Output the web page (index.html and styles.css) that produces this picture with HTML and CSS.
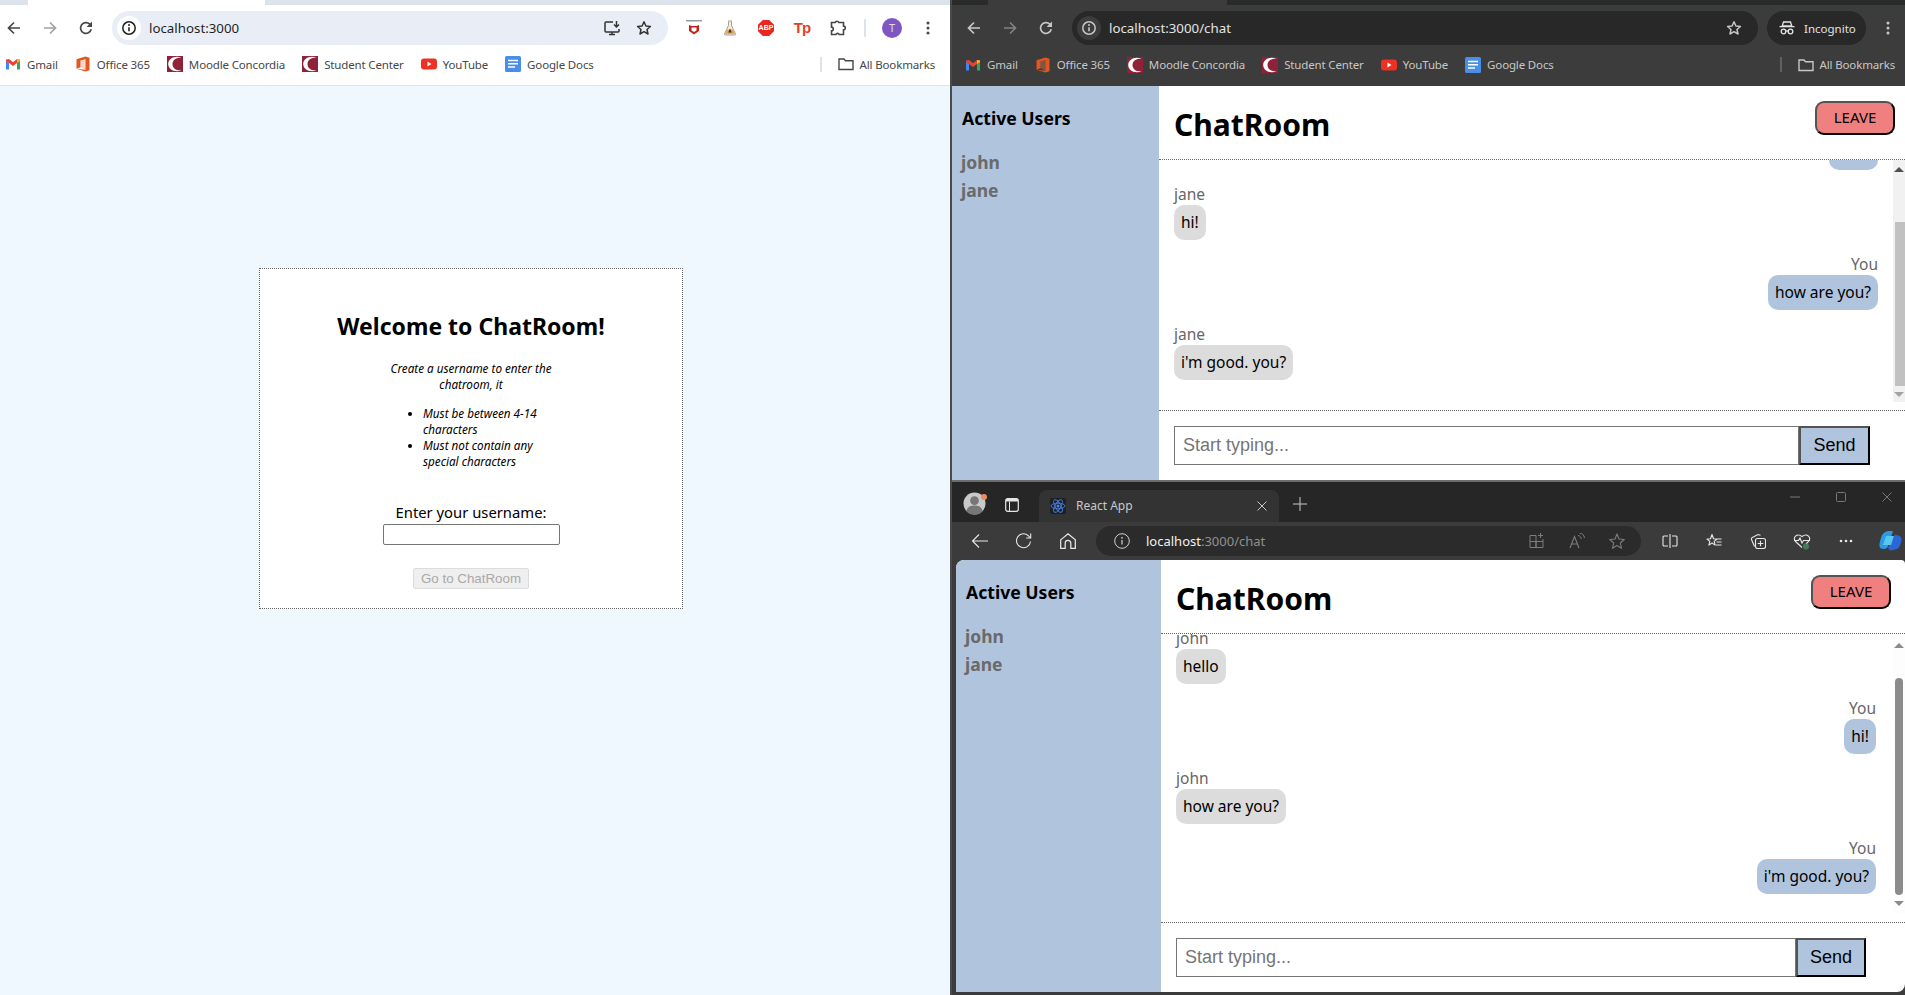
FILE: index.html
```html
<!DOCTYPE html>
<html lang="en">
<head>
<meta charset="utf-8">
<title>ChatRoom windows</title>
<link rel="stylesheet" href="styles.css">
</head>
<body>
<svg class="sprite" aria-hidden="true">
  <defs>
    <symbol id="i-back" viewBox="0 0 16 16"><path d="M14 8H2.500M8 2.500 2.500 8 8 13.500" fill="none" stroke="currentColor" stroke-width="1.700"/></symbol>
    <symbol id="i-fwd" viewBox="0 0 16 16"><path d="M2 8h11.500M8 2.500 13.500 8 8 13.500" fill="none" stroke="currentColor" stroke-width="1.700"/></symbol>
    <symbol id="i-reload" viewBox="0 0 16 16"><path d="M13.200 9.200A5.400 5.400 0 1 1 11.800 4.200L13.500 6" fill="none" stroke="currentColor" stroke-width="1.700"/><path d="M14 1.600V7H8.600Z" fill="currentColor"/></symbol>
    <symbol id="i-info" viewBox="0 0 16 16"><circle cx="8" cy="8" r="6.200" fill="none" stroke="currentColor" stroke-width="1.500"/><path d="M8 7.200v4" stroke="currentColor" stroke-width="1.600"/><circle cx="8" cy="5" r="1" fill="currentColor"/></symbol>
    <symbol id="i-star" viewBox="0 0 16 16"><path d="M8 1.800 9.900 6l4.500.5-3.400 3 1 4.500L8 11.700 4 14l1-4.500-3.400-3L6.100 6Z" fill="none" stroke="currentColor" stroke-width="1.500" stroke-linejoin="round"/></symbol>
    <symbol id="i-install" viewBox="0 0 17 16"><path d="M9 2H2a1 1 0 0 0-1 1v8a1 1 0 0 0 1 1h12a1 1 0 0 0 1-1V9M5 14.500h6M8 12v2.500" fill="none" stroke="currentColor" stroke-width="1.500"/><path d="M12.500 1v5.500M10 4.500l2.500 2.500L15 4.500" fill="none" stroke="currentColor" stroke-width="1.500"/></symbol>
    <symbol id="i-gmail" viewBox="0 0 16 16"><path d="M1 4v9.500h3V7Z" fill="#4285f4"/><path d="M15 4v9.500h-3V7Z" fill="#34a853"/><path d="M1 3.500 4 3l4 3.200L12 3l3 .5V5l-3 2-4 3-4-3-3-2Z" fill="#ea4335"/><path d="M12 3l3 .5V5l-3 2Z" fill="#fbbc04"/></symbol>
    <symbol id="i-office" viewBox="0 0 16 16"><path d="M1.500 3.200 10.500.5l4 1.300v12.400l-4 1.300-9-2.700 9 1V3.300L5.500 4.500v6.700l-4 1.600Z" fill="#e2561f"/><path d="M5.500 4.500l5-1.200v10.500l-5-2.600Z" fill="#f08a5d" opacity=".35"/></symbol>
    <symbol id="i-concordia" viewBox="0 0 16 16"><rect width="16" height="16" fill="#8f2139"/><path d="M14.500 1.800C9-1 1.200 2 1.200 8S9 17 14.500 14.200C10 15 5.500 12.500 5.500 8S10 1 14.500 1.800Z" fill="#fff"/><rect x="14.700" y="5" width="1.300" height="6" fill="#8f2139"/></symbol>
    <symbol id="i-youtube" viewBox="0 0 16 16"><rect y="2.500" width="16" height="11" rx="3" fill="#ed3124"/><path d="M6.500 5.600v4.800L10.500 8Z" fill="#fff"/></symbol>
    <symbol id="i-docs" viewBox="0 0 16 16"><rect width="16" height="16" rx="1.500" fill="#4a8fe7"/><path d="M3 3.700h10v1.500H3ZM3 7h10v1.500H3ZM3 10.300h7v1.500H3Z" fill="#fff"/></symbol>
    <symbol id="i-folder" viewBox="0 0 16 16"><path d="M1 3h5l1.500 1.800H15v8.700H1Z" fill="none" stroke="currentColor" stroke-width="1.400"/></symbol>
    <symbol id="i-mcafee" viewBox="0 0 16 16"><path d="M0 0h16v1.500H0Z" fill="#9a9a9a"/><path d="M3 5l2.500 1h5L13 5v6l-5 3.500L3 11Z" fill="#c4211c"/><path d="M5.500 7.500h5v3L8 12l-2.500-1.500Z" fill="#fff"/></symbol>
    <symbol id="i-flask" viewBox="0 0 16 16"><path d="M6 1h4M6.500 1.500v4L2.500 14a.8.8 0 0 0 .7 1h9.600a.8.8 0 0 0 .7-1L9.500 5.500v-4" fill="#f5ecdf" stroke="#a9a096" stroke-width="1"/><path d="M5 9.500h6l2 4.500H3Z" fill="#eda955"/><path d="M8 8.500l1.800 4H6.200Z" fill="#333"/></symbol>
    <symbol id="i-puzzle" viewBox="0 0 16 16"><path d="M1.500 2.500h3.700a1.900 1.900 0 0 1 3.600 0h4.700v3.600a1.800 1.800 0 0 1 0 3.700v4.700H9.300a1.900 1.900 0 0 0-3.500 0H1.500v-3.800a1.800 1.800 0 0 0 0-3.600Z" fill="none" stroke="currentColor" stroke-width="1.600"/></symbol>
    <symbol id="i-dots" viewBox="0 0 16 16"><circle cx="8" cy="3" r="1.500" fill="currentColor"/><circle cx="8" cy="8" r="1.500" fill="currentColor"/><circle cx="8" cy="13" r="1.500" fill="currentColor"/></symbol>
    <symbol id="i-incog" viewBox="0 0 16 16"><path d="M4.500 2h7l1.300 4H3.200ZM.5 6.700h15" fill="none" stroke="currentColor" stroke-width="1.300"/><circle cx="4.500" cy="11.500" r="2.300" fill="none" stroke="currentColor" stroke-width="1.300"/><circle cx="11.500" cy="11.500" r="2.300" fill="none" stroke="currentColor" stroke-width="1.300"/><path d="M6.800 11h2.400" stroke="currentColor" stroke-width="1.300"/></symbol>
    <symbol id="i-profile" viewBox="0 0 24 24"><circle cx="12" cy="12" r="11.500" fill="#c9c9c9"/><circle cx="12" cy="9" r="4.500" fill="#777"/><path d="M3.500 20c1-5 5-6 8.500-6s7.500 1 8.500 6A11.500 11.500 0 0 1 3.500 20Z" fill="#777"/></symbol>
    <symbol id="i-tabs" viewBox="0 0 14 14"><rect x=".7" y=".7" width="12.600" height="12.600" rx="2" fill="none" stroke="currentColor" stroke-width="1.200"/><path d="M1 3.600h12V1.500L12 1H2L1 1.500Z" fill="currentColor"/><path d="M4.500 3.500v9.500" stroke="currentColor" stroke-width="1"/></symbol>
    <symbol id="i-react" viewBox="0 0 16 16"><rect width="16" height="16" rx="2" fill="#1c2127"/><g fill="none" stroke="#4b7fe0" stroke-width=".9"><ellipse cx="8" cy="8" rx="7" ry="2.800"/><ellipse cx="8" cy="8" rx="7" ry="2.800" transform="rotate(60 8 8)"/><ellipse cx="8" cy="8" rx="7" ry="2.800" transform="rotate(120 8 8)"/></g><circle cx="8" cy="8" r="1.500" fill="#4b7fe0"/></symbol>
    <symbol id="i-close" viewBox="0 0 12 12"><path d="M1.500 1.500l9 9M10.500 1.500l-9 9" stroke="currentColor" stroke-width="1" fill="none"/></symbol>
    <symbol id="i-plus" viewBox="0 0 14 14"><path d="M7 0v14M0 7h14" stroke="currentColor" stroke-width="1" fill="none"/></symbol>
    <symbol id="i-eback" viewBox="0 0 18 16"><path d="M17 8H1.500M8 1.500 1.500 8 8 14.500" fill="none" stroke="currentColor" stroke-width="1.100"/></symbol>
    <symbol id="i-ereload" viewBox="0 0 18 18"><path d="M15.500 9.500A7 7 0 1 1 13.500 3.800L15.500 6" fill="none" stroke="currentColor" stroke-width="1.100"/><path d="M15.700 1.500V6h-4.500" fill="none" stroke="currentColor" stroke-width="1.100"/></symbol>
    <symbol id="i-home" viewBox="0 0 16 16"><path d="M1.500 7 8 1.500 14.500 7v7.500h-4V10a2.500 2.500 0 0 0-5 0v4.500h-4Z" fill="none" stroke="currentColor" stroke-width="1.100"/></symbol>
    <symbol id="i-einfo" viewBox="0 0 16 16"><circle cx="8" cy="8" r="7.300" fill="none" stroke="currentColor" stroke-width="1"/><path d="M8 7v4.500" stroke="currentColor" stroke-width="1.200"/><circle cx="8" cy="4.800" r=".9" fill="currentColor"/></symbol>
    <symbol id="i-grid" viewBox="0 0 16 16"><path d="M1 2.500h6v12H1ZM1 8.500h13V14.500H7M7 8.500V14.500M14 8.500V6M11.500 0v5M9 2.500h5" fill="none" stroke="currentColor" stroke-width="1"/></symbol>
    <symbol id="i-read" viewBox="0 0 16 16"><path d="M1 15 5.500 3.500 10 15M2.500 11h6" fill="none" stroke="currentColor" stroke-width="1.100"/><path d="M9 2.500c2 .3 3 1.500 3.300 3.500M10.500 0c3 .5 4.600 2.200 5 5" fill="none" stroke="currentColor" stroke-width="1"/></symbol>
    <symbol id="i-estar" viewBox="0 0 16 16"><path d="M8 1 10 6l5.300.5-4 3.500 1.200 5.200L8 12.500l-4.500 2.700L4.700 10 .7 6.500 6 6Z" fill="none" stroke="currentColor" stroke-width="1.100" stroke-linejoin="round"/></symbol>
    <symbol id="i-split" viewBox="0 0 16 16"><path d="M6 3H2a1 1 0 0 0-1 1v8a1 1 0 0 0 1 1h4M10 3h4a1 1 0 0 1 1 1v8a1 1 0 0 1-1 1h-4M8 1v14" fill="none" stroke="currentColor" stroke-width="1.100"/></symbol>
    <symbol id="i-favs" viewBox="0 0 16 16"><path d="M6 1.500 7.500 5.800l3.500.2-2.800 2.400.9 3.700L6 10l-3.100 2.100.9-3.700L1 6l3.500-.2ZM11 6h4.500M10.500 9h5M10 12h5.500" fill="none" stroke="currentColor" stroke-width="1.100" stroke-linejoin="round"/></symbol>
    <symbol id="i-coll" viewBox="0 0 16 16"><path d="M4.500 13.500 1.500 6.500a1.500 1.500 0 0 1 .8-2L8 1.500l2.500.8" fill="none" stroke="currentColor" stroke-width="1.100"/><rect x="5.500" y="5.500" width="10" height="10" rx="2" fill="none" stroke="currentColor" stroke-width="1.100"/><path d="M10.500 7.700v5.600M7.700 10.500h5.600" stroke="currentColor" stroke-width="1.100"/></symbol>
    <symbol id="i-heart" viewBox="0 0 18 18"><path d="M9 15.500 2.500 9.500C-.5 6 3.500 .5 9 4.500c5.500-4 9.500 1.500 6.500 5l-2.500 2.500" fill="none" stroke="currentColor" stroke-width="1.100"/><path d="M1 8.500h4.500l1.500-2.500 2 5 1.500-2.500H17" fill="none" stroke="currentColor" stroke-width="1.100"/><circle cx="13" cy="14.500" r="3" fill="#4a7a5c"/></symbol>
    <symbol id="i-edots" viewBox="0 0 14 4"><circle cx="2" cy="2" r="1.300" fill="currentColor"/><circle cx="7" cy="2" r="1.300" fill="currentColor"/><circle cx="12" cy="2" r="1.300" fill="currentColor"/></symbol>
    <symbol id="i-copilot" viewBox="0 0 24 24"><path d="M3 9c1-4 4-7 8-7h4l-5 15c-.5 2-2 3-4 3l-3-.5C.5 18 1.500 14 3 9Z" fill="#2b9be6"/><path d="M10 19c1 2 3 3 5 2l4-1c2-1 3.500-4 4.500-9 .3-2-.5-3-2-4L17 5.500Z" fill="#2a66d8"/><path d="M8 7h8l-3 9H5Z" fill="#59c6ee"/></symbol>
    <symbol id="i-min" viewBox="0 0 12 12"><path d="M1 6h10" stroke="currentColor" stroke-width="1" fill="none"/></symbol>
    <symbol id="i-max" viewBox="0 0 12 12"><rect x="1.500" y="1.500" width="9" height="9" rx="1" stroke="currentColor" stroke-width="1" fill="none"/></symbol>
  </defs>
</svg>

<!-- Left: Chrome, light theme -->
<section class="window win-left">
  <div class="tabstrip tabstrip-light"><span class="tabstrip-tab tab-left"></span></div>
  <div class="toolbar toolbar-light">
    <span class="btn"><svg class="ic16"><use href="#i-back"/></svg></span>
    <span class="btn btn-off"><svg class="ic16"><use href="#i-fwd"/></svg></span>
    <span class="btn"><svg class="ic16"><use href="#i-reload"/></svg></span>
    <div class="omni omni-light">
      <span class="omni-info"><svg class="ic16"><use href="#i-info"/></svg></span>
      <span class="omni-url">localhost:3000</span>
      <svg class="ic-install"><use href="#i-install"/></svg>
      <svg class="ic-omnistar"><use href="#i-star"/></svg>
    </div>
    <span class="btn"><svg class="ic16"><use href="#i-mcafee"/></svg></span>
    <span class="btn"><svg class="ic16"><use href="#i-flask"/></svg></span>
    <span class="btn"><span class="ext-abp">ABP</span></span>
    <span class="btn"><span class="ext-tp">Tp</span></span>
    <span class="btn"><svg class="ic16"><use href="#i-puzzle"/></svg></span>
    <span class="tool-sep"></span>
    <span class="btn"><span class="avatar">T</span></span>
    <span class="btn"><svg class="ic16"><use href="#i-dots"/></svg></span>
  </div>
  <div class="bookmarks bookmarks-light">
    <span class="bm"><svg class="ic16"><use href="#i-gmail"/></svg>Gmail</span>
    <span class="bm"><svg class="ic16"><use href="#i-office"/></svg>Office 365</span>
    <span class="bm"><svg class="ic16"><use href="#i-concordia"/></svg>Moodle Concordia</span>
    <span class="bm"><svg class="ic16"><use href="#i-concordia"/></svg>Student Center</span>
    <span class="bm"><svg class="ic16"><use href="#i-youtube"/></svg>YouTube</span>
    <span class="bm"><svg class="ic16"><use href="#i-docs"/></svg>Google Docs</span>
    <span class="bm-end"><span class="bm-sep"></span><span class="bm"><svg class="ic16"><use href="#i-folder"/></svg>All Bookmarks</span></span>
  </div>
  <main class="login-page">
    <form class="login-card">
      <h1 class="login-title">Welcome to ChatRoom!</h1>
      <div class="login-rules">
        <p class="login-intro">Create a username to enter the chatroom, it</p>
        <ul class="login-list">
          <li>Must be between 4-14 characters</li>
          <li>Must not contain any special characters</li>
        </ul>
      </div>
      <label class="login-label" for="username">Enter your username:</label>
      <input class="login-input" id="username" type="text">
      <button class="login-btn" type="button" disabled>Go to ChatRoom</button>
    </form>
  </main>
</section>

<!-- Top right: Chrome, incognito -->
<section class="window win-incog">
  <div class="tabstrip tabstrip-dark"><span class="tabstrip-tab tab-right"></span></div>
  <div class="toolbar toolbar-dark">
    <span class="btn"><svg class="ic16"><use href="#i-back"/></svg></span>
    <span class="btn btn-off"><svg class="ic16"><use href="#i-fwd"/></svg></span>
    <span class="btn"><svg class="ic16"><use href="#i-reload"/></svg></span>
    <div class="omni omni-dark">
      <span class="omni-info"><svg class="ic16"><use href="#i-info"/></svg></span>
      <span class="omni-url">localhost:3000/chat</span>
      <svg class="ic-omnistar"><use href="#i-star"/></svg>
    </div>
    <span class="incog-pill"><svg class="ic16"><use href="#i-incog"/></svg>Incognito</span>
    <span class="btn"><svg class="ic16"><use href="#i-dots"/></svg></span>
  </div>
  <div class="bookmarks bookmarks-dark">
    <span class="bm"><svg class="ic16"><use href="#i-gmail"/></svg>Gmail</span>
    <span class="bm"><svg class="ic16"><use href="#i-office"/></svg>Office 365</span>
    <span class="bm"><svg class="ic16"><use href="#i-concordia"/></svg>Moodle Concordia</span>
    <span class="bm"><svg class="ic16"><use href="#i-concordia"/></svg>Student Center</span>
    <span class="bm"><svg class="ic16"><use href="#i-youtube"/></svg>YouTube</span>
    <span class="bm"><svg class="ic16"><use href="#i-docs"/></svg>Google Docs</span>
    <span class="bm-end"><span class="bm-sep"></span><span class="bm"><svg class="ic16"><use href="#i-folder"/></svg>All Bookmarks</span></span>
  </div>
  <div class="chat chat-incog">
    <aside class="users">
      <h2 class="users-title">Active Users</h2>
      <div class="users-name">john</div>
      <div class="users-name">jane</div>
    </aside>
    <div class="room">
      <header class="room-head">
        <h1 class="room-title">ChatRoom</h1>
        <button class="leave" type="button">LEAVE</button>
      </header>
      <div class="feed">
        <div class="msgs">
          <div class="msg msg-me msg-first"><span class="bubble bubble-scrolled"></span></div>
          <div class="msg"><span class="msg-who">jane</span><span class="bubble">hi!</span></div>
          <div class="msg msg-me"><span class="msg-who">You</span><span class="bubble">how are you?</span></div>
          <div class="msg"><span class="msg-who">jane</span><span class="bubble">i'm good. you?</span></div>
        </div>
        <div class="sbar">
          <span class="sbar-up"></span>
          <span class="sbar-gap"></span>
          <span class="sbar-thumb"></span>
          <span class="sbar-down"></span>
        </div>
      </div>
      <form class="composer">
        <input class="composer-input" type="text" placeholder="Start typing...">
        <button class="composer-send" type="button">Send</button>
      </form>
    </div>
  </div>
</section>

<!-- Bottom right: Edge -->
<section class="window win-edge">
  <div class="edge-tabs">
    <svg class="edge-profile"><use href="#i-profile"/></svg>
    <span class="edge-dot"></span>
    <svg class="edge-tabicon"><use href="#i-tabs"/></svg>
    <div class="edge-tab">
      <svg class="ic16"><use href="#i-react"/></svg>
      <span class="edge-tab-title">React App</span>
      <svg class="edge-x"><use href="#i-close"/></svg>
    </div>
    <svg class="edge-plus"><use href="#i-plus"/></svg>
    <div class="edge-ctrls">
      <svg class="edge-ctrl"><use href="#i-min"/></svg>
      <svg class="edge-ctrl"><use href="#i-max"/></svg>
      <svg class="edge-ctrl"><use href="#i-close"/></svg>
    </div>
  </div>
  <div class="edge-bar">
    <svg class="edge-nav"><use href="#i-eback"/></svg>
    <svg class="edge-nav"><use href="#i-ereload"/></svg>
    <svg class="edge-nav"><use href="#i-home"/></svg>
    <div class="edge-omni">
      <svg class="ic16 edge-info"><use href="#i-einfo"/></svg>
      <span class="edge-url"><span class="edge-host">localhost</span>:3000/chat</span>
      <svg class="ic16 edge-omni-ic"><use href="#i-grid"/></svg>
      <svg class="ic16 edge-omni-ic"><use href="#i-read"/></svg>
      <svg class="ic16 edge-omni-ic"><use href="#i-estar"/></svg>
    </div>
    <div class="edge-tools">
      <svg class="ic16"><use href="#i-split"/></svg>
      <svg class="ic16"><use href="#i-favs"/></svg>
      <svg class="ic16"><use href="#i-coll"/></svg>
      <svg class="ic18"><use href="#i-heart"/></svg>
      <svg class="edge-more"><use href="#i-edots"/></svg>
      <svg class="edge-copilot"><use href="#i-copilot"/></svg>
    </div>
  </div>
  <div class="edge-body">
    <div class="chat chat-edge">
      <aside class="users">
        <h2 class="users-title">Active Users</h2>
        <div class="users-name">john</div>
        <div class="users-name">jane</div>
      </aside>
      <div class="room">
        <header class="room-head">
          <h1 class="room-title">ChatRoom</h1>
          <button class="leave" type="button">LEAVE</button>
        </header>
        <div class="feed">
          <div class="msgs">
            <div class="msg msg-first"><span class="msg-who">john</span><span class="bubble">hello</span></div>
            <div class="msg msg-me"><span class="msg-who">You</span><span class="bubble">hi!</span></div>
            <div class="msg"><span class="msg-who">john</span><span class="bubble">how are you?</span></div>
            <div class="msg msg-me"><span class="msg-who">You</span><span class="bubble">i'm good. you?</span></div>
          </div>
          <div class="sbar">
            <span class="sbar-up"></span>
            <span class="sbar-gap"></span>
            <span class="sbar-thumb"></span>
            <span class="sbar-down"></span>
          </div>
        </div>
        <form class="composer">
          <input class="composer-input" type="text" placeholder="Start typing...">
          <button class="composer-send" type="button">Send</button>
        </form>
      </div>
    </div>
  </div>
</section>
</body>
</html>
```
FILE: styles.css
```css
* { box-sizing: border-box; }
html, body { margin: 0; height: 100%; overflow: hidden; }
body {
  background: #4a4a4a;
  font-family: "Noto Sans", "Open Sans", sans-serif;
  color: #000;
  position: relative;
}
.sprite { width: 0; height: 0; display: block; overflow: hidden; }
svg { display: block; flex: none; }
.ic16 { width: 16px; height: 16px; }
.ic18 { width: 18px; height: 18px; margin-left: -1px; }

/* Desktop windows */
.window { position: absolute; display: flex; flex-direction: column; overflow: hidden; }
.win-left { left: 0; top: 0; width: 950px; height: 995px; background: #fff; }
.win-incog { left: 952px; top: 0; width: 953px; height: 480px; background: #3b3c3b; }
.win-edge { left: 952px; top: 480px; width: 953px; height: 515px; background: #3b3b3b; border-top: 2px solid #6b6d6b; }

/* Chrome frame */
.tabstrip { height: 5px; flex: none; display: flex; }
.tabstrip-light { background: #dde3ea; }
.tabstrip-dark { background: #292a2a; }
.tabstrip-tab { display: block; height: 5px; }
.tab-left { width: 237px; margin-left: 28px; background: #fff; }
.tab-right { width: 239px; margin-left: 36px; background: #3b3c3b; }

.toolbar { height: 46px; flex: none; display: flex; align-items: center; gap: 8px; }
.toolbar-light { color: #474747; padding: 0 8px 0 0; }
.toolbar-dark { color: #c7c7c7; padding: 0 3px 0 8px; }
.btn { width: 28px; height: 28px; display: flex; align-items: center; justify-content: center; flex: none; }
.btn-off { opacity: .5; }
.ext-abp {
  width: 16px; height: 16px; background: #e8251f; color: #fff;
  clip-path: polygon(30% 0, 70% 0, 100% 30%, 100% 70%, 70% 100%, 30% 100%, 0 70%, 0 30%);
  font: 700 7px/16px "Liberation Sans", sans-serif; text-align: center;
}
.ext-tp { color: #e73f28; font: 700 15px/16px "Liberation Sans", sans-serif; letter-spacing: -1px; }
.tool-sep { width: 2px; height: 18px; margin: 0 4px; background: #dde3ea; flex: none; }
.avatar {
  width: 20px; height: 20px; border-radius: 50%;
  background: #7e57c2; color: #ddd;
  font-size: 11px; line-height: 20px; text-align: center;
}
.omni {
  height: 34px; border-radius: 17px; flex: 1;
  display: flex; align-items: center; margin: 0 4px; padding: 0 16px 0 5px;
  font-size: 13.300px;
}
.omni-light { background: #e9eef6; color: #1f1f1f; }
.omni-dark { background: #282828; color: #e3e3e3; margin-right: 1px; }
.omni-info { width: 24px; height: 24px; border-radius: 50%; display: flex; align-items: center; justify-content: center; flex: none; }
.omni-light .omni-info { background: #fff; }
.omni-dark .omni-info { background: #3b3c3b; color: #c7c7c7; }
.omni-url { margin-left: 8px; flex: 1; }
.ic-install { width: 17px; height: 16px; margin-right: 15px; color: #333; }
.ic-omnistar { width: 16px; height: 16px; }
.omni-light .ic-omnistar { color: #333; }
.omni-dark .ic-omnistar { color: #c7c7c7; }

.incog-pill {
  width: 99px; height: 34px; border-radius: 17px; background: #282828; color: #e3e3e3;
  display: flex; align-items: center; gap: 9px; padding-left: 12px; font-size: 11.500px; flex: none;
}

.bookmarks {
  height: 35px; flex: none; display: flex; align-items: center; gap: 17px;
  padding-bottom: 8px; font-size: 11.500px; letter-spacing: -.15px;
}
.bookmarks-light { background: #fff; color: #474747; border-bottom: 1px solid #dfe3e8; padding-left: 5px; padding-right: 15px; }
.bookmarks-dark { background: #3b3c3b; color: #c7c7c7; padding-left: 13px; padding-right: 10px; }
.bm { display: flex; align-items: center; gap: 6px; white-space: nowrap; }
.bm-end { margin-left: auto; display: flex; align-items: center; gap: 16px; }
.bm-sep { width: 2px; height: 15px; background: #dde3ea; }
.bookmarks-dark .bm-sep { background: #5f6060; }

/* Login */
.login-page { flex: 1; background: #f0f8ff; display: flex; padding: 182px 0 0 259px; }
.login-card {
  width: 424px; height: 341px; background: #fff; border: 1px dotted #666;
  display: flex; flex-direction: column; align-items: center; padding-top: 41px;
}
.login-title { margin: 0; font-size: 23px; line-height: 32px; font-weight: 700; }
.login-rules { width: 170px; font-size: 11.700px; font-style: italic; line-height: 16px; margin-top: 18px; }
.login-intro { margin: 0; text-align: center; }
.login-list { margin: 13px 0 0; padding: 0 0 0 37px; }
.login-label { margin: 33px 0 1px; font-size: 14.800px; line-height: 21px; }
.login-input { width: 177px; height: 21px; border: 1px solid #767676; border-radius: 2px; padding: 0; background: #fff; }
.login-btn {
  margin-top: 23px; width: 116px; height: 21px; padding: 0;
  background: #efefef; border: 1px solid #dcdcdc; border-radius: 2px;
  color: #a9a9a9; font: 13.333px "Liberation Sans", sans-serif;
}

/* Chat */
.chat { display: flex; background: #fff; flex: 1; min-height: 0; }
.users { background: #b0c4de; flex: none; padding: 20px 0 0 10px; }
.chat-incog .users { width: 207px; }
.chat-edge .users { width: 205px; border-top-left-radius: 8px; }
.users-title { margin: 0 0 18px; font-size: 17.600px; line-height: 24px; font-weight: 700; }
.users-name { margin-left: -1px; font-size: 17.500px; line-height: 28px; font-weight: 700; color: #6a6a6a; }
.room { flex: 1; min-width: 0; display: flex; flex-direction: column; }
.room-head {
  height: 74px; flex: none; border-bottom: 1px dotted #666;
  display: flex; align-items: flex-start; justify-content: space-between; padding: 15px 10px 0 15px;
}
.chat-edge .room-head { padding-right: 14px; }
.room-title { margin: 0; font-size: 30px; line-height: 48px; font-weight: 700; }
.leave {
  width: 80px; height: 34px; padding: 0 0 2px; border: 2px outset #000; border-radius: 9px;
  background: #f08080; color: #000; font: 15px "Noto Sans", sans-serif;
}
.feed { flex: 1; min-height: 0; display: flex; margin-bottom: 8px; }
.msgs { flex: 1; min-width: 0; overflow: hidden; display: flex; flex-direction: column; padding: 0 15px; }
.chat-edge .msgs { padding-right: 17px; }
.msg { display: flex; flex-direction: column; align-items: flex-start; flex: none; margin-bottom: 14px; }
.msg-me { align-items: flex-end; }
.chat-incog .msg-first { margin-top: -25px; }
.chat-edge .msg-first { margin-top: -6px; }
.msg-who { font-size: 15.500px; line-height: 21px; color: #666; }
.bubble { display: block; padding: 7px; border-radius: 10px; font-size: 15.500px; line-height: 21px; background: #dcdcdc; white-space: nowrap; }
.msg-me .bubble { background: #b0c4de; }
.bubble-scrolled { width: 49px; height: 35px; }

.sbar { width: 12px; flex: none; background: #f1f1f1; display: flex; flex-direction: column; align-items: center; }
.sbar-up { width: 0; height: 0; margin-top: 7px; border: 5px solid transparent; border-top: 0; border-bottom: 5px solid #505050; flex: none; }
.sbar-gap { height: 50px; flex: none; }
.sbar-thumb { width: 10px; margin-left: 2px; flex: 1; background: #c1c1c1; }
.sbar-down { width: 0; height: 0; margin: 6px 0 5px; border: 5px solid transparent; border-bottom: 0; border-top: 5px solid #a3a3a3; flex: none; }
.chat-edge .sbar { background: #fdfdfd; }
.chat-edge .sbar-up { margin-top: 9px; border-bottom-color: #8b8b8b; }
.chat-edge .sbar-gap { height: 30px; }
.chat-edge .sbar-thumb { width: 8px; margin-left: 0; background: #8b8b8b; border-radius: 4px; }
.chat-edge .sbar-down { border-top-color: #8b8b8b; margin-bottom: 8px; }

.composer { flex: none; height: 70px; border-top: 1px dotted #666; display: flex; align-items: flex-start; padding: 15px 35px 0 15px; }
.chat-edge .composer { padding-right: 39px; }
.composer-input {
  flex: 1; min-width: 0; height: 39px; border: 1px solid #767676; padding: 0 8px; background: #fff;
  font: 18px "Liberation Sans", sans-serif; color: #000;
}
.composer-input::placeholder { color: #757575; opacity: 1; }
.composer-send {
  width: 71px; height: 39px; padding: 0; background: #b0c4de; border: 2px outset #000;
  font: 18px "Liberation Sans", sans-serif; color: #000;
}
.chat-edge .composer-send { width: 70px; }

/* Edge frame */
.edge-tabs { height: 40px; flex: none; background: #262626; display: flex; align-items: flex-end; position: relative; }
.edge-profile { width: 23px; height: 23px; margin: 0 0 7px 11px; }
.edge-dot { position: absolute; left: 29px; top: 12px; width: 6px; height: 6px; border-radius: 50%; background: #ee8b5b; }
.edge-tabicon { width: 14px; height: 14px; margin: 0 0 10px 19px; color: #e6e6e6; }
.edge-tab {
  width: 240px; height: 32px; margin-left: 20px; background: #333; border-radius: 8px 8px 0 0;
  display: flex; align-items: center; padding: 0 11px; font-size: 12px; line-height: 30px; color: #c9c9c9;
}
.edge-tab-title { margin-left: 10px; flex: 1; }
.edge-x { width: 12px; height: 12px; color: #c9c9c9; }
.edge-plus { width: 14px; height: 14px; margin: 0 0 11px 14px; color: #c9c9c9; }
.edge-ctrls { margin-left: auto; display: flex; gap: 34px; padding: 0 12px 19px 0; color: #777; }
.edge-ctrl { width: 12px; height: 12px; }
.edge-bar { height: 38px; flex: none; background: #3b3b3b; display: flex; align-items: center; color: #e8e8e8; }
.edge-nav { width: 18px; height: 18px; margin-left: 26px; }
.edge-nav:first-child { margin-left: 19px; }
.edge-omni {
  margin-left: 19px; width: 545px; height: 30px; border-radius: 15px; background: #2b2b2b;
  display: flex; align-items: center; padding: 0 16px 0 18px; font-size: 13px; color: #8f8f8f;
}
.edge-info { color: #d0d0d0; }
.edge-url { margin-left: 16px; flex: 1; }
.edge-host { color: #f0f0f0; }
.edge-omni-ic { color: #7d7d7d; margin-left: 24px; }
.edge-tools { display: flex; align-items: center; gap: 28px; margin-left: 21px; }
.edge-more { width: 14px; height: 4px; }
.edge-copilot { width: 24px; height: 24px; margin-left: -3px; }
.edge-body { flex: 1; min-height: 0; padding: 0 0 3px 4px; display: flex; }
.chat-edge { border-radius: 8px 4px 8px 0; overflow: hidden; }
```
